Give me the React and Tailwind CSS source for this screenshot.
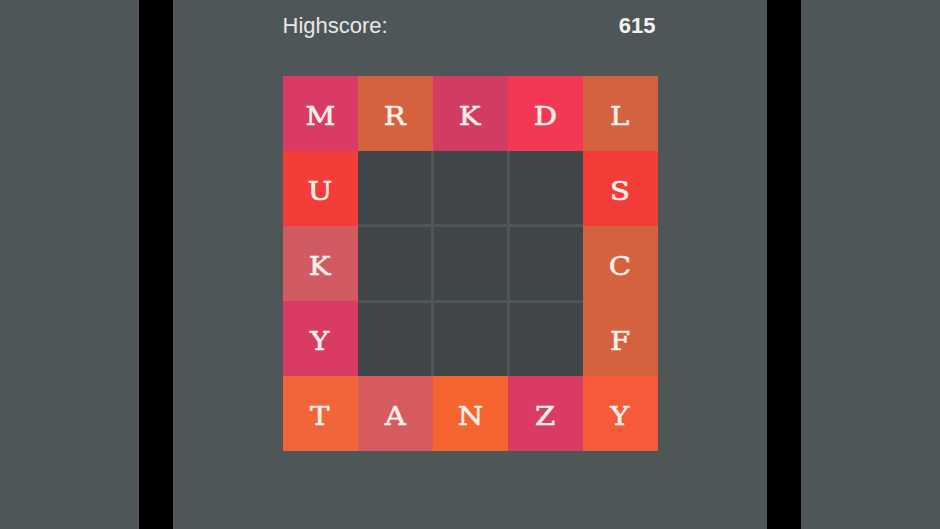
import React from "react";

const C = {
  pink: "bg-[#d93b62]",
  pinkD: "bg-[#d33c62]",
  rust: "bg-[#d5623f]",
  hot: "bg-[#f43854]",
  red: "bg-[#f43d38]",
  rose: "bg-[#d25a62]",
  orange: "bg-[#f2643a]",
  roseA: "bg-[#d55b5f]",
  orangeN: "bg-[#f6642f]",
  orangeY: "bg-[#f65a38]",
};

function Tile({ letter, color }) {
  return (
    <div className={`${color} flex items-center justify-center pt-[5px]`}>
      <span
        className="inline-block scale-x-[1.12] text-[26px] leading-none text-[#f7efe9]"
        style={{ fontFamily: '"DejaVu Serif", "Liberation Serif", serif', WebkitTextStroke: "0.6px #f7efe9" }}
      >
        {letter}
      </span>
    </div>
  );
}

export default function App() {
  const top = [
    ["M", C.pink],
    ["R", C.rust],
    ["K", C.pinkD],
    ["D", C.hot],
    ["L", C.rust],
  ];
  const left = [
    ["U", C.red],
    ["K", C.rose],
    ["Y", C.pink],
  ];
  const right = [
    ["S", C.red],
    ["C", C.rust],
    ["F", C.rust],
  ];
  const bottom = [
    ["T", C.orange],
    ["A", C.roseA],
    ["N", C.orangeN],
    ["Z", C.pink],
    ["Y", C.orangeY],
  ];

  return (
    <div className="flex h-[529px] w-[940px] overflow-hidden bg-[#4f5658]">
      <div className="w-[139px] shrink-0" />
      <div className="w-[34px] shrink-0 bg-black" />
      <div className="flex flex-1 flex-col items-center">
        <div
          className="mt-[12px] flex w-[375px] items-center justify-between text-[22px] leading-[28px] text-[#e8e8e8]"
          style={{ fontFamily: '"Liberation Sans", Arial, sans-serif' }}
        >
          <span>Highscore:</span>
          <span className="pr-[2px] font-bold text-[#f2f2f2]">615</span>
        </div>
        <div className="mt-[36px] grid grid-cols-[repeat(5,75px)] grid-rows-[repeat(5,75px)]">
          {top.map(([l, c], i) => (
            <Tile key={"t" + i} letter={l} color={c} />
          ))}
          <div className="col-start-1 row-start-2 row-span-3 grid grid-rows-[repeat(3,75px)]">
            {left.map(([l, c], i) => (
              <Tile key={"l" + i} letter={l} color={c} />
            ))}
          </div>
          <div className="col-start-2 col-span-3 row-start-2 row-span-3 grid grid-cols-3 grid-rows-3 gap-[3px]">
            {Array.from({ length: 9 }).map((_, i) => (
              <div key={i} className="bg-[#404647]" />
            ))}
          </div>
          <div className="col-start-5 row-start-2 row-span-3 grid grid-rows-[repeat(3,75px)]">
            {right.map(([l, c], i) => (
              <Tile key={"r" + i} letter={l} color={c} />
            ))}
          </div>
          {bottom.map(([l, c], i) => (
            <Tile key={"b" + i} letter={l} color={c} />
          ))}
        </div>
      </div>
      <div className="w-[34px] shrink-0 bg-black" />
      <div className="w-[139px] shrink-0" />
    </div>
  );
}
